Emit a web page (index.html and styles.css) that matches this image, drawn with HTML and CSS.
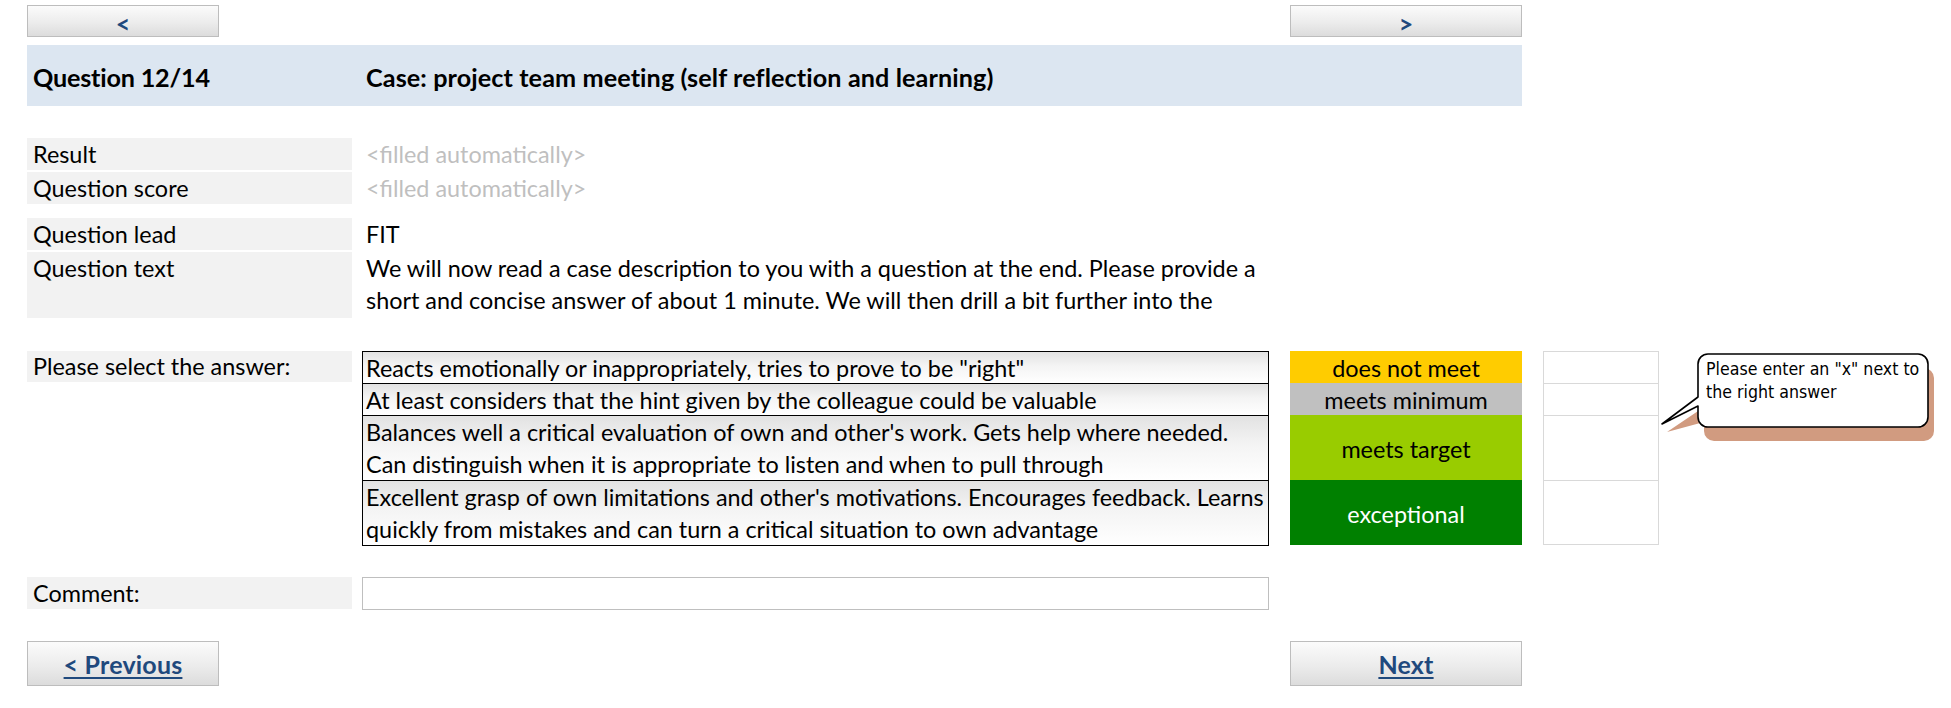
FILE: index.html
```html
<!DOCTYPE html>
<html lang="en">
<head>
<meta charset="utf-8">
<title>Question 12/14</title>
<link rel="stylesheet" href="styles.css">
</head>
<body>
<div class="sheet">
  <div class="nav nav-top">
    <a class="btn btn-small btn-left">&lt;</a>
    <a class="btn btn-small btn-right">&gt;</a>
  </div>

  <div class="header">
    <div class="h-num">Question 12/14</div>
    <div class="h-title">Case: project team meeting (self reflection and learning)</div>
  </div>

  <div class="info info-first">
    <div class="row r1"><div class="lbl">Result</div><div class="val auto">&lt;filled automatically&gt;</div></div>
    <div class="row r1"><div class="lbl">Question score</div><div class="val auto">&lt;filled automatically&gt;</div></div>
  </div>

  <div class="info info-second">
    <div class="row r1"><div class="lbl">Question lead</div><div class="val">FIT</div></div>
    <div class="row r2"><div class="lbl">Question text</div><div class="val multi">We will now read a case description to you with a question at the end. Please provide a<br>short and concise answer of about 1 minute. We will then drill a bit further into the</div></div>
  </div>

  <div class="answers">
    <div class="lbl sel">Please select the answer:</div>

    <div class="ans a1">Reacts emotionally or inappropriately, tries to prove to be "right"</div>
    <div class="ans a2">At least considers that the hint given by the colleague could be valuable</div>
    <div class="ans a3">Balances well a critical evaluation of own and other's work. Gets help where needed.<br>Can distinguish when it is appropriate to listen and when to pull through</div>
    <div class="ans a4 last">Excellent grasp of own limitations and other's motivations. Encourages feedback. Learns<br>quickly from mistakes and can turn a critical situation to own advantage</div>

    <div class="rate g1">does not meet</div>
    <div class="rate g2">meets minimum</div>
    <div class="rate g3">meets target</div>
    <div class="rate g4">exceptional</div>

    <div class="box b1"></div>
    <div class="box b2"></div>
    <div class="box b3"></div>
    <div class="box b4 last"></div>

    <div class="callout">
      <svg class="bubble" width="290" height="100" viewBox="0 0 290 100" aria-hidden="true">
        <path d="M59 20 h210 a10 10 0 0 1 10 10 v53 a10 10 0 0 1 -10 10 h-210 a10 10 0 0 1 -10 -10 v-9 l-37 10 l37 -25 v-29 a10 10 0 0 1 10 -10 z" fill="#d19b80"/>
        <path d="M53 6 h210 a10 10 0 0 1 10 10 v53 a10 10 0 0 1 -10 10 h-210 a10 10 0 0 1 -10 -10 v-11 l-36 18 l36 -27 v-33 a10 10 0 0 1 10 -10 z" fill="#ffffff" stroke="#000" stroke-width="1.6" stroke-linejoin="round"/>
      </svg>
      <div class="callout-text">Please enter an "x" next to<br>the right answer</div>
    </div>
  </div>

  <div class="row comment">
    <div class="lbl">Comment:</div>
    <div class="input"></div>
  </div>

  <div class="nav nav-bottom">
    <a class="btn btn-big btn-left"><span class="u">&lt; Previous</span></a>
    <a class="btn btn-big btn-right"><span class="u">Next</span></a>
  </div>
</div>
</body>
</html>
```

FILE: styles.css
```css
html, body {
  margin: 0;
  padding: 0;
  background: #ffffff;
}

body {
  font-family: Lato, "Open Sans", sans-serif;
  font-size: 23.4px;
  color: #000;
}

.sheet {
  padding: 5px 0 0 27px;
  width: 1924px;
  box-sizing: border-box;
}

/* navigation buttons */
.nav {
  display: flex;
  justify-content: space-between;
  width: 1495px;
}

.btn {
  display: flex;
  align-items: center;
  justify-content: center;
  box-sizing: border-box;
  border: 1px solid #bdbdbd;
  background: linear-gradient(to bottom, #fbfbfb 0%, #ececec 55%, #dcdcdc 100%);
  color: #1f497d;
  font-weight: 700;
  text-decoration: none;
}

.btn-left { width: 192px; }
.btn-right { width: 232px; }

.btn-small {
  height: 32px;
  font-size: 25px;
  padding-top: 3px;
}

.btn-big {
  height: 45px;
  font-size: 25px;
}

.btn .u {
  text-decoration: underline;
  text-decoration-thickness: 2px;
  text-underline-offset: 3px;
  letter-spacing: 0.2px;
}

/* header band */
.header {
  margin-top: 8px;
  height: 61px;
  width: 1495px;
  background: #dce6f1;
  display: flex;
  align-items: center;
  font-weight: 700;
  font-size: 25.2px;
  padding-top: 3px;
  box-sizing: border-box;
}

.h-num {
  width: 339px;
  padding-left: 6px;
  box-sizing: border-box;
  letter-spacing: -0.2px;
}

.h-title {
  letter-spacing: 0.1px;
}

/* info rows */
.info-first { margin-top: 32px; }
.info-second { margin-top: 14px; }

.row {
  display: flex;
}

.r1 { height: 32px; margin-bottom: 2px; }
.r2 { height: 66px; }

.lbl {
  width: 325px;
  flex: none;
  background: #f2f2f2;
  padding-left: 6px;
  box-sizing: border-box;
  line-height: 32px;
  white-space: nowrap;
}

.val {
  margin-left: 14px;
  line-height: 32px;
  white-space: nowrap;
}

.val.auto { color: #bfbfbf; }

.val.multi {
  line-height: 32px;
  overflow: hidden;
}

/* answers grid */
.answers {
  position: relative;
  margin-top: 33px;
  display: grid;
  grid-template-columns: 325px 10px 907px 21px 232px 21px 116px;
  grid-template-rows: 32px 32px 65px 66px;
}

.sel {
  grid-column: 1;
  grid-row: 1;
  height: 31px;
  line-height: 31px;
}

.ans {
  grid-column: 3;
  box-sizing: border-box;
  border: 1px solid #000;
  border-bottom: none;
  padding-left: 3px;
  line-height: 32px;
  white-space: nowrap;
  overflow: hidden;
  background: linear-gradient(to bottom, #e2e2e2 0%, #f4f4f4 45%, #ffffff 100%);
}

.ans.last { border-bottom: 1px solid #000; }

.a1, .g1, .b1 { grid-row: 1; }
.a2, .g2, .b2 { grid-row: 2; }
.a3, .g3, .b3 { grid-row: 3; }
.a4, .g4, .b4 { grid-row: 4; }

.rate {
  grid-column: 5;
  display: flex;
  align-items: center;
  justify-content: center;
  padding-top: 2px;
  box-sizing: border-box;
}

.g1 { background: #ffcc00; }
.g2 { background: #c0c0c0; }
.g3 { background: #99cc00; }
.g4 { background: #008000; color: #ffffff; height: 65px; }

.box {
  grid-column: 7;
  box-sizing: border-box;
  border: 1px solid #d9d9d9;
  border-bottom: none;
}

.box.last { border-bottom: 1px solid #d9d9d9; height: 65px; }

/* callout */
.callout {
  position: absolute;
  left: 1628px;
  top: -3px;
  width: 290px;
  height: 100px;
}

.bubble {
  position: absolute;
  left: 0;
  top: 0;
}

.callout-text {
  position: absolute;
  left: 51px;
  top: 10px;
  font-family: "DejaVu Sans Condensed", "DejaVu Sans", sans-serif;
  font-stretch: condensed;
  font-size: 17.6px;
  line-height: 23px;
  white-space: nowrap;
  color: #000;
}

/* comment */
.comment {
  margin-top: 31px;
  height: 33px;
}

.comment .lbl {
  height: 32px;
}

.input {
  margin-left: 10px;
  width: 907px;
  height: 33px;
  box-sizing: border-box;
  border: 1px solid #bfbfbf;
  background: #fff;
}

.nav-bottom {
  margin-top: 31px;
}
```
